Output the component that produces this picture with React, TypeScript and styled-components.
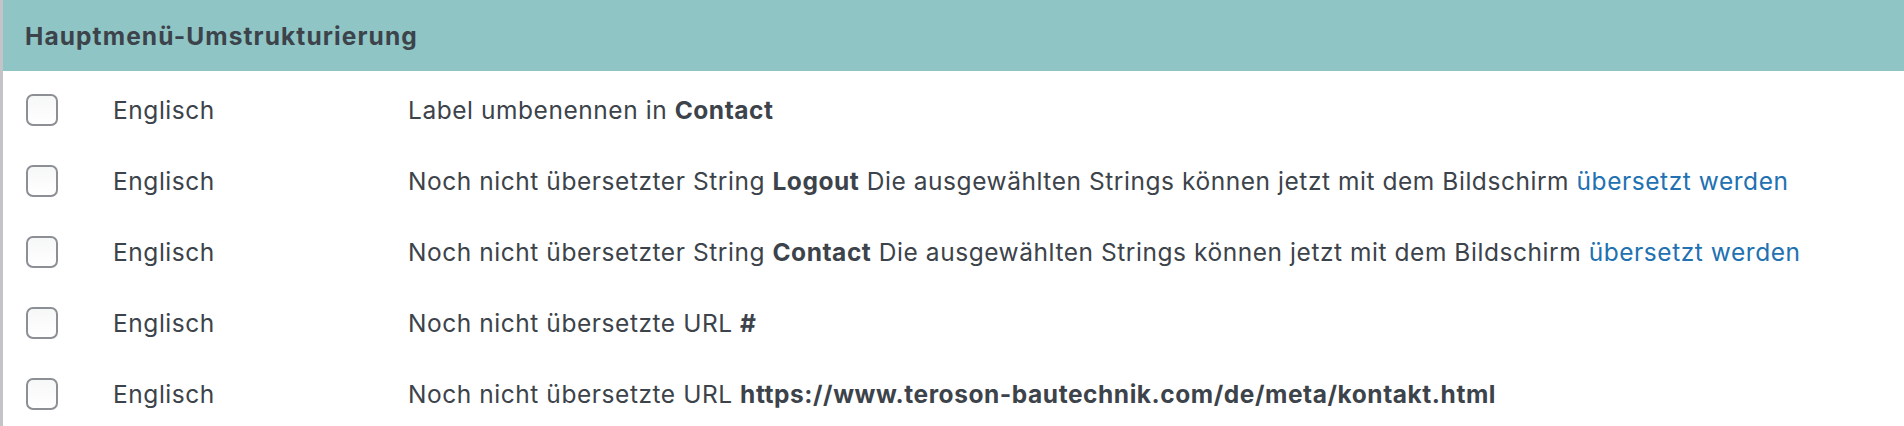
import React from "react";
import styled, { createGlobalStyle } from "styled-components";

const Global = createGlobalStyle`
  html, body { margin: 0; padding: 0; background: #fff; }
  body { font-family: Inter, "Noto Sans", "Liberation Sans", sans-serif; color: #3c434a; }
`;

const Panel = styled.section`
  border-left: 3px solid #c3c4c7;
  min-height: 426px;
  box-sizing: border-box;
`;

const Header = styled.h3`
  margin: 0;
  height: 71px;
  display: flex;
  align-items: center;
  padding-left: 22px;
  background: #8fc5c5;
  font-size: 24.5px;
  font-weight: 700;
  letter-spacing: 1.1px;
  color: #3c434a;
`;

const Rows = styled.div`
  padding-top: 3px;
`;

const Row = styled.div`
  display: grid;
  grid-template-columns: 87px 295px 1fr;
  align-items: center;
  height: 71px;
  padding-left: 23px;
  font-size: 24.5px;
  letter-spacing: 0.55px;
`;

const Check = styled.input.attrs({ type: "checkbox" })`
  appearance: none;
  margin: 0;
  width: 32px;
  height: 32px;
  box-sizing: border-box;
  border: 2px solid #8c8f94;
  border-radius: 7px;
  background: linear-gradient(#f6f7f7, #fff);
`;

const Cell = styled.span`
  white-space: nowrap;
`;

const B = styled.strong`
  font-weight: 700;
`;

const Link = styled.a`
  color: #2271b1;
  text-decoration: none;
`;

const rows: React.ReactNode[] = [
  <>Label umbenennen in <B>Contact</B></>,
  <>Noch nicht übersetzter String <B>Logout</B> Die ausgewählten Strings können jetzt mit dem Bildschirm <Link href="#">übersetzt werden</Link></>,
  <>Noch nicht übersetzter String <B>Contact</B> Die ausgewählten Strings können jetzt mit dem Bildschirm <Link href="#">übersetzt werden</Link></>,
  <>Noch nicht übersetzte URL <B>#</B></>,
  <>Noch nicht übersetzte URL <B>https://www.teroson-bautechnik.com/de/meta/kontakt.html</B></>,
];

export default function App() {
  return (
    <>
      <Global />
      <Panel>
        <Header>Hauptmenü-Umstrukturierung</Header>
        <Rows>
          {rows.map((r, i) => (
            <Row key={i}>
              <Check />
              <Cell>Englisch</Cell>
              <Cell>{r}</Cell>
            </Row>
          ))}
        </Rows>
      </Panel>
    </>
  );
}
